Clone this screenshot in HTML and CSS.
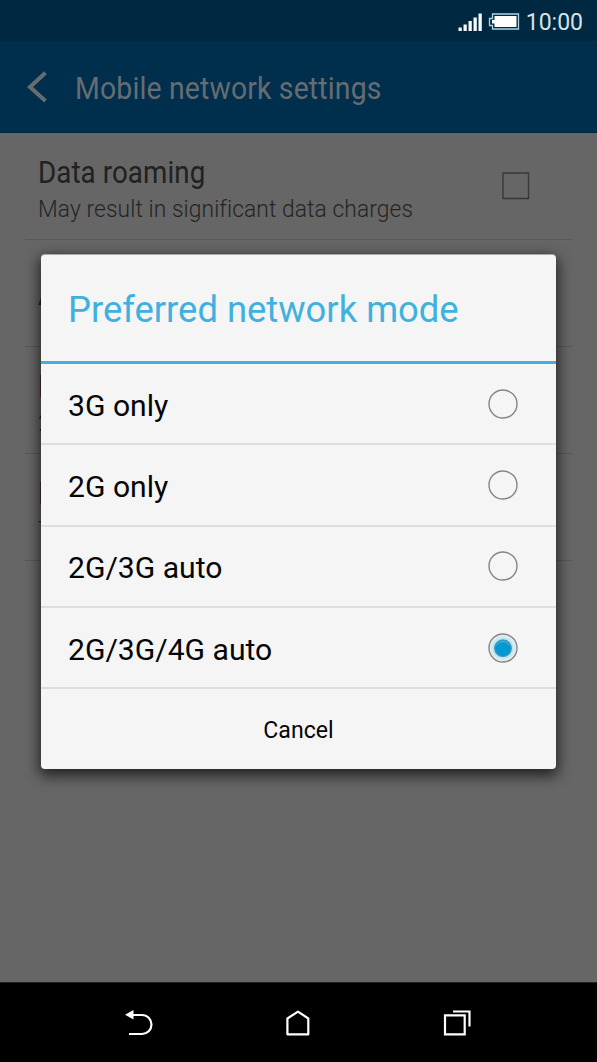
FILE: index.html
```html
<!DOCTYPE html>
<html lang="en">
<head>
<meta charset="utf-8">
<title>Mobile network settings</title>
<link rel="stylesheet" href="styles.css">
</head>
<body>
<div class="phone">
  <div class="status">
    <svg class="status-icons" width="62" height="20" viewBox="0 0 62 20">
      <path fill="#f2f8fb" d="M.500 15.500h3.300v3.500H.500zM5.500 12.500h3.300V19H5.500zM10.500 9h3.300v10h-3.300zM15.500 5.500h3.300V19h-3.300zM20.500 1.500h3.300V19h-3.300z"/>
      <path fill="none" stroke="#a9d3e6" stroke-width="1.300" d="M34.500 2h26v15h-26v-3.500h-3v-7h3z"/>
      <path fill="#fff" d="M36.500 4h22v11h-22v-3.500h-2.500v-3.500h2.500z"/>
    </svg>
    <span class="time">10:00</span>
  </div>
  <header class="appbar">
    <svg class="back" width="20" height="32" viewBox="0 0 20 32"><path fill="none" stroke="#666d71" stroke-width="4" d="M18.500 1.700 3 16l15.500 14"/></svg>
    <h1 class="heading">Mobile network settings</h1>
  </header>
  <main class="list">
    <section class="row">
      <div class="copy">
        <div class="name">Data roaming</div>
        <div class="note">May result in significant data charges</div>
      </div>
      <svg class="checkbox" width="28" height="28" viewBox="0 0 28 28"><path fill="none" stroke="#383838" stroke-width="1.400" d="M1 1h25.500v25.500H1z"/></svg>
    </section>
    <section class="row single"><div class="copy"><div class="name">A</div></div></section>
    <section class="row"><div class="copy"><div class="name">N</div><div class="note">2</div></div></section>
    <section class="row"><div class="copy"><div class="name">N</div><div class="note">T</div></div></section>
  </main>
  <nav class="navbar">
    <svg width="28" height="26" viewBox="0 0 28 26"><path fill="none" stroke="#fff" stroke-width="2.200" d="M8 5h9a9.300 9.300 0 0 1 0 19H4"/><path fill="#fff" d="M0 4.700 8.500 0v9.500z"/></svg>
    <svg width="24" height="26" viewBox="0 0 24 26"><path fill="none" stroke="#fff" stroke-width="2.200" stroke-linejoin="round" d="M1.400 8.500 12 1.600 22.300 8.500v15.800H1.400z"/></svg>
    <svg width="28" height="26" viewBox="0 0 28 26"><path fill="none" stroke="#fff" stroke-width="2.200" d="M2 5.300h19.700v19H2zM10 1.500h16.500v15"/></svg>
  </nav>
  <div class="dialog">
    <h2 class="dialog-title"><span>Preferred network mode</span></h2>
    <div class="option"><span>3G only</span><svg class="radio" viewBox="0 0 30 30"><circle class="ring" cx="15" cy="15" r="14"/></svg></div>
    <div class="option"><span>2G only</span><svg class="radio" viewBox="0 0 30 30"><circle class="ring" cx="15" cy="15" r="14"/></svg></div>
    <div class="option"><span>2G/3G auto</span><svg class="radio" viewBox="0 0 30 30"><circle class="ring" cx="15" cy="15" r="14"/></svg></div>
    <div class="option"><span>2G/3G/4G auto</span><svg class="radio" viewBox="0 0 30 30">
      <defs><radialGradient id="glow"><stop offset=".6" stop-color="#b8dfee"/><stop offset="1" stop-color="#eef4f6"/></radialGradient></defs>
      <circle class="ring" cx="15" cy="15" r="14" fill="url(#glow)"/>
      <circle cx="15" cy="15.200" r="8.300" fill="#0099d0" stroke="#4197ba" stroke-width="1.200"/>
      <path d="M8.800 12.200a7 7 0 0 1 12.400 0" fill="none" stroke="#55b5d8" stroke-width="1"/>
    </svg></div>
    <div class="cancel">Cancel</div>
  </div>
</div>
</body>
</html>
```
FILE: styles.css
```css
* { box-sizing: border-box; }
body { margin: 0; font-family: Roboto, "Liberation Sans", sans-serif; }
.phone { position: relative; display: flex; flex-direction: column; width: 597px; height: 1062px; overflow: hidden; background: #666; }
.status { height: 41px; padding: 0 14px 0 0; display: flex; justify-content: flex-end; align-items: center; gap: 6px; background: #002941; }
.status-icons { margin-top: 2px; }
.time { font-size: 23px; line-height: 27px; color: #d7e2e8; margin-top: 3px; }
.appbar { height: 92px; padding: 3px 0 0 27px; display: flex; align-items: center; background: #002f4e; border-bottom: 1px solid #00243c; }
.back { margin-top: -2px; margin-right: 28px; }
.heading { margin: 2px 0 0; font-size: 31.500px; line-height: 36px; font-weight: 400; letter-spacing: .2px; color: #666d71; white-space: nowrap; transform: scaleX(.9); transform-origin: left; }
.list { flex: 1; padding: 0 25px; }
.row { height: 107px; padding: 0 42px 0 13px; display: flex; justify-content: space-between; align-items: center; border-bottom: 1px solid #595959; }
.copy { width: 400px; padding-top: 7px; white-space: nowrap; }
.single .copy { padding-top: 3px; }
.name { font-size: 31.500px; line-height: 39px; letter-spacing: .1px; color: #212121; transform: scaleX(.88); transform-origin: left; }
.note { font-size: 24px; line-height: 35px; font-weight: 300; letter-spacing: .1px; color: #242424; transform: scaleX(.949); transform-origin: left; }
.checkbox { margin-top: -1px; }
.navbar { height: 80px; padding: 0 126px 0 125px; display: flex; justify-content: space-between; align-items: center; background: #000; border-top: 1px solid #222; }
.dialog { position: absolute; left: 41px; top: 254px; width: 515px; height: 515px; border-top: 1px solid #aaa; border-radius: 4px; background: #f5f5f5; box-shadow: 0 5px 14px 2px rgba(0,0,0,.65); overflow: hidden; color: #050505; }
.dialog-title { height: 109px; margin: 0; padding: 2px 27px 0; display: flex; align-items: center; border-bottom: 3px solid #40b1de; font-size: 36.400px; font-weight: 400; color: #40b1de; white-space: nowrap; }
.option { height: 81.300px; padding: 3px 38.500px 0 27px; display: flex; justify-content: space-between; align-items: center; border-bottom: 2px solid #dedede; font-size: 30.100px; }
.radio { width: 30px; height: 30px; margin-top: -3px; }
.ring { stroke: #858585; stroke-width: 1.400px; }
.ring:not([fill]) { fill: none; }
.cancel { height: 81px; padding-top: 2px; display: flex; justify-content: center; align-items: center; font-size: 23.100px; }
```
